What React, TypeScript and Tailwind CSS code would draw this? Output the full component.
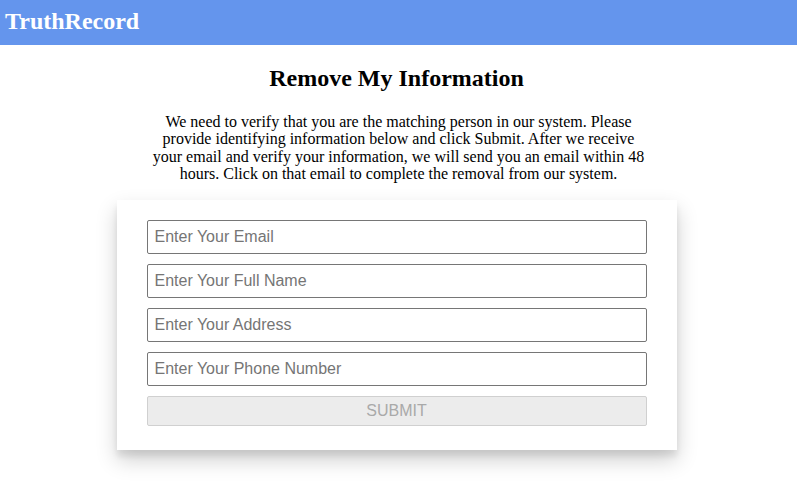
import React from 'react';

const fields = ['Enter Your Email', 'Enter Your Full Name', 'Enter Your Address', 'Enter Your Phone Number'];

export default function App() {
  return (
    <div className="min-h-screen bg-white font-['Liberation_Serif',serif] text-black">
      <header className="h-[45px] bg-[#6495ed] px-[5px] flex items-center">
        <h1 className="text-[24px] font-bold text-white leading-none -mt-[3px]">TruthRecord</h1>
      </header>

      <main className="flex flex-col items-center">
        <h2 className="mt-[19px] ml-[-4px] text-[24px] font-bold leading-[28px]">Remove My Information</h2>
        <p className="mt-[21px] w-[500px] text-center text-[16px] leading-[17.4px]">
          We need to verify that you are the matching person in our system. Please provide identifying information
          below and click Submit. After we receive your email and verify your information, we will send you an email
          within 48 hours. Click on that email to complete the removal from our system.
        </p>

        <form
          className="mt-[17px] ml-[-4px] w-[560px] bg-white px-[30px] pt-[20px] pb-[24px] shadow-[0_10px_20px_rgba(0,0,0,0.19),0_6px_6px_rgba(0,0,0,0.08)] flex flex-col gap-[10px]"
          onSubmit={(e) => e.preventDefault()}
        >
          {fields.map((f) => (
            <input
              key={f}
              placeholder={f}
              className="h-[34px] w-full rounded-[2px] border border-[#767676] px-[7px] font-['Liberation_Sans',sans-serif] text-[16px] text-black placeholder:text-[#757575] outline-none"
            />
          ))}
          <button
            type="submit"
            disabled
            className="h-[30px] w-full rounded-[2px] border border-[#d0d0d0] bg-[#ececec] font-['Liberation_Sans',sans-serif] text-[16px] text-[#a9a9a9]"
          >
            SUBMIT
          </button>
        </form>
      </main>
    </div>
  );
}
